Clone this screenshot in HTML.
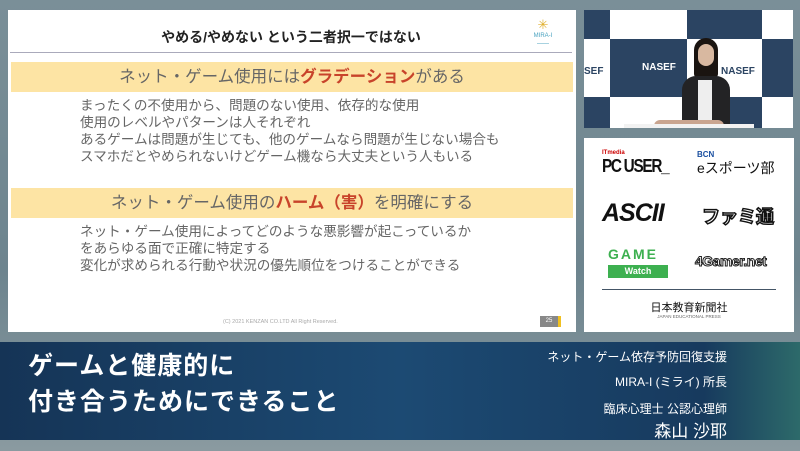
<!DOCTYPE html>
<html><head><meta charset="utf-8"><style>
*{margin:0;padding:0;box-sizing:border-box}
body{width:800px;height:451px;overflow:hidden;position:relative;font-family:"Liberation Sans","Noto Sans CJK JP",sans-serif;background:linear-gradient(180deg,#7a8f98 0%,#6d848e 60%,#8a9aa0 100%)}
.abs{position:absolute}
#slide{left:8px;top:10px;width:568px;height:322px;background:#fff}
.title{left:0;width:566px;top:17px;text-align:center;font-size:14px;font-weight:bold;color:#222}
.hr{left:2px;width:562px;top:42px;height:1px;background:#aab}
.band{left:3px;width:562px;height:30px;background:#fde4a4;text-align:center;font-size:16.5px;color:#666;line-height:30px}
.band b{color:#c8432a}
.txt{left:72px;font-size:13.6px;line-height:17px;color:#666;white-space:nowrap}
#video{left:584px;top:10px;width:209px;height:118px;background:#fff;overflow:hidden}
.sq{position:absolute;background:#2b4462}
#logos{left:584px;top:138px;width:210px;height:194px;background:#fff}
#band{left:0;top:342px;width:800px;height:98px;background:linear-gradient(90deg,#153456 0%,#1c4a73 50%,#173a5e 88%,#2d6a6a 100%)}
.h1{left:28px;color:#fff;font-size:25px;font-weight:bold;letter-spacing:1px}
.r{right:73px;color:#fff;text-align:right;font-size:12px}
</style></head><body>
<div id="slide" class="abs">
 <div class="abs title">やめる/やめない という二者択一ではない</div>
 <div class="abs" style="left:518px;top:8px;width:34px;height:34px;font-size:6px;color:#4aa3c0;text-align:center;line-height:8px"><span style="color:#e0b030;font-size:13px;line-height:14px">✳</span><br>MIRA-I<br><span style="font-size:4px">━━━</span></div>
 <div class="abs hr"></div>
 <div class="abs band" style="top:52px">ネット・ゲーム使用には<b>グラデーション</b>がある</div>
 <div class="abs txt" style="top:87px">まったくの不使用から、問題のない使用、依存的な使用<br>使用のレベルやパターンは人それぞれ<br>あるゲームは問題が生じても、他のゲームなら問題が生じない場合も<br>スマホだとやめられないけどゲーム機なら大丈夫という人もいる</div>
 <div class="abs band" style="top:178px">ネット・ゲーム使用の<b>ハーム（害）</b>を明確にする</div>
 <div class="abs txt" style="top:213px">ネット・ゲーム使用によってどのような悪影響が起こっているか<br>をあらゆる面で正確に特定する<br>変化が求められる行動や状況の優先順位をつけることができる</div>
 <div class="abs" style="left:215px;top:309px;font-size:5.5px;color:#aaa">(C) 2021 KENZAN CO.LTD All Right Reserved.</div>
 <div class="abs" style="left:532px;top:306px;width:21px;height:11px;background:#888;border-right:3px solid #f0c020;font-size:6px;color:#fff;text-align:center;line-height:11px">25</div>
</div>
<div id="video" class="abs">
 <div class="sq" style="left:0;top:0;width:26px;height:29px"></div>
 <div class="sq" style="left:103px;top:0;width:75px;height:29px"></div>
 <div class="sq" style="left:26px;top:29px;width:77px;height:58px"></div>
 <div class="sq" style="left:178px;top:29px;width:31px;height:58px"></div>
 <div class="sq" style="left:0;top:87px;width:26px;height:31px"></div>
 <div class="sq" style="left:103px;top:87px;width:75px;height:31px"></div>
 <div class="abs" style="left:58px;top:52px;color:#fff;font-size:10px;font-weight:bold">NASEF</div>
 <div class="abs" style="left:0;top:56px;color:#2b4462;font-size:10px;font-weight:bold">SEF</div>
 <div class="abs" style="left:137px;top:56px;color:#2b4462;font-size:10px;font-weight:bold">NASEF</div>
 <div class="abs" style="left:110px;top:28px;width:24px;height:40px;border-radius:12px 12px 4px 4px;background:#1a1410"></div>
 <div class="abs" style="left:98px;top:66px;width:48px;height:52px;border-radius:14px 14px 0 0;background:#232325"></div>
 <div class="abs" style="left:114px;top:70px;width:14px;height:48px;background:#eee"></div>
 <div class="abs" style="left:114px;top:34px;width:16px;height:22px;border-radius:8px;background:#d8b8a0"></div>
 <div class="abs" style="left:70px;top:110px;width:70px;height:22px;border-radius:6px;background:#c9a590"></div>
 <div class="abs" style="left:40px;top:114px;width:130px;height:8px;background:#f2f2f2"></div>
</div>
<div id="logos" class="abs">
 <div class="abs" style="left:18px;top:12px;font-size:6px;color:#c00;font-weight:bold">ITmedia</div>
 <div class="abs" style="left:18px;top:18px;font-size:18px;font-weight:bold;color:#111;letter-spacing:-1.5px;transform:scaleX(.85);transform-origin:left">PC USER_</div>
 <div class="abs" style="left:113px;top:12px;font-size:8px;color:#1a4fa0;font-weight:bold">BCN</div>
 <div class="abs" style="left:113px;top:20px;font-size:14px;color:#111">eスポーツ部</div>
 <div class="abs" style="left:18px;top:61px;font-size:25px;font-weight:bold;font-style:italic;color:#111;letter-spacing:-1px">ASCII</div>
 <div class="abs" style="left:118px;top:65px;font-size:18px;font-weight:bold;color:#fff;-webkit-text-stroke:1.5px #111">ファミ通</div>
 <div class="abs" style="left:24px;top:108px;font-size:14px;font-weight:bold;color:#3db050;letter-spacing:2px">GAME</div>
 <div class="abs" style="left:24px;top:127px;width:60px;height:13px;background:#3db050;color:#fff;font-size:9px;font-weight:bold;text-align:center;line-height:13px">Watch</div>
 <div class="abs" style="left:111px;top:115px;font-size:14px;font-weight:bold;color:#fff;-webkit-text-stroke:1px #222;letter-spacing:-.5px">4Gamer.net</div>
 <div class="abs" style="left:18px;top:151px;width:174px;height:1px;background:#456"></div>
 <div class="abs" style="left:0;width:210px;top:161px;text-align:center;font-size:11px;color:#111">日本教育新聞社</div>
 <div class="abs" style="left:0;width:210px;top:176px;text-align:center;font-size:4.5px;color:#666">JAPAN EDUCATIONAL PRESS</div>
</div>
<div id="band" class="abs">
 <div class="abs h1" style="top:4px">ゲームと健康的に</div>
 <div class="abs h1" style="top:40px">付き合うためにできること</div>
 <div class="abs r" style="top:6px">ネット・ゲーム依存予防回復支援</div>
 <div class="abs r" style="top:31px">MIRA-I (ミライ) 所長</div>
 <div class="abs r" style="top:58px">臨床心理士 公認心理師</div>
 <div class="abs r" style="top:75px;font-size:17px">森山 沙耶</div>
</div>
</body></html>
